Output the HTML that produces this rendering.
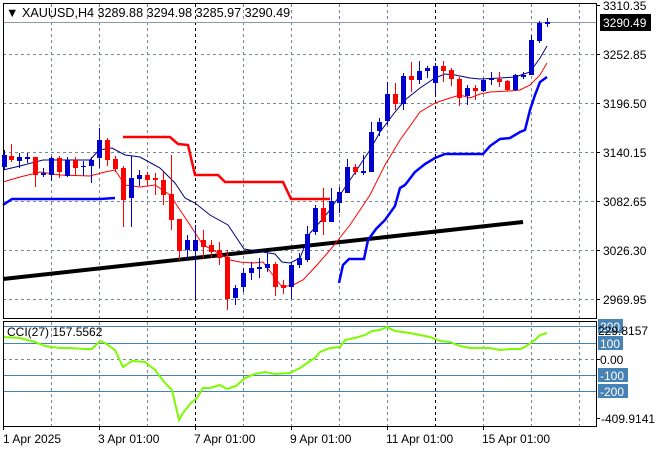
<!DOCTYPE html>
<html><head><meta charset="utf-8"><style>
html,body{margin:0;padding:0;background:#fff;width:660px;height:450px;overflow:hidden}
svg text{font-family:"Liberation Sans",sans-serif;font-size:12px;fill:#000}
</style></head><body>
<svg width="660" height="450" viewBox="0 0 660 450" xmlns="http://www.w3.org/2000/svg">
<g stroke="#778899" stroke-width="1" stroke-dasharray="3,3" fill="none">
<line x1="3" y1="54.5" x2="596" y2="54.5"/><line x1="3" y1="103.5" x2="596" y2="103.5"/>
<line x1="3" y1="152.5" x2="596" y2="152.5"/><line x1="3" y1="201.5" x2="596" y2="201.5"/>
<line x1="3" y1="250.5" x2="596" y2="250.5"/><line x1="3" y1="299.5" x2="596" y2="299.5"/>
<line x1="3" y1="359.5" x2="596" y2="359.5"/>
<path d="M51.5 4V318M99.5 4V318M147.5 4V318M243.5 4V318M291.5 4V318M339.5 4V318M387.5 4V318M483.5 4V318M531.5 4V318M579.5 4V318"/>
<path d="M51.5 322V426M99.5 322V426M147.5 322V426M243.5 322V426M291.5 322V426M339.5 322V426M387.5 322V426M483.5 322V426M531.5 322V426M579.5 322V426"/>
</g>
<g stroke="#000" stroke-dasharray="3,3"><path d="M195.5 4V318M435.5 4V318M195.5 322V426M435.5 322V426"/></g>
<line x1="3" y1="22.5" x2="596" y2="22.5" stroke="#8a9aa8"/>
<g stroke="#4682b4"><path d="M3 326.5H596M3 343.5H596M3 375.5H596M3 391.5H596"/></g>
<line x1="3" y1="279" x2="523" y2="222" stroke="#000" stroke-width="4"/>
<polyline fill="none" stroke="#ff0000" stroke-width="2.5" points="123,137 170,137 178,144 188,145 195,175 218,175 225,182 283,182 291,199 330,199"/>
<polyline fill="none" stroke="#0000ff" stroke-width="2.5" points="3,205 12,199 100,199 115,198"/>
<polyline fill="none" stroke="#0000ff" stroke-width="2.5" points="339,283 343,265 349,259 364,259 368,240 376,229 385,220 395,206 400,188 405,185 415,172 425,164 435,158 445,154 483,154 490,146 500,139 510,138 520,132 525,130 530,110 535,95 540,82 547,77"/>
<polyline fill="none" stroke="#000080" stroke-width="1" points="3,170 20,166 43,160 90,160 99,150 112,148 125,155 140,157 160,168 175,183 185,198 195,203 210,215 228,225 244,249 275,254 282,262 290,263 300,258 305,245 310,233 320,222 330,210 340,195 350,180 360,165 370,150 380,132 395,112 405,100 420,88 435,78 445,74 455,75 470,78 480,79 500,78 515,77 530,72 540,58 547,46"/>
<polyline fill="none" stroke="#ff0000" stroke-width="1" points="3,182 20,177 40,172 60,175 90,176 105,172 115,170 125,185 140,187 155,185 170,195 180,210 190,225 203,245 213,250 230,260 240,262 253,263 263,262 282,287 293,285 303,280 317,265 330,250 350,225 370,195 385,165 400,140 420,112 435,103 450,98 460,95 470,98 480,94 490,92 510,91 520,90 530,85 540,75 547,63"/>
<polyline fill="none" stroke="#7cfc00" stroke-width="2" points="3,337 20,338 35,342 45,346 60,348 70,348 85,349 92,349 100,341 105,343 115,350 123,367 132,361 145,362 155,370 165,383 172,390 179,420 183,413 190,404 197,398 203,388 210,388 220,385 227,389 236,386 245,378 255,374 265,372 275,374 290,373 300,368 310,361 315,358 320,352 330,348 340,347 345,340 355,338 365,335 372,331 380,330 387,327 395,331 410,333 430,337 440,341 450,342 460,346 470,348 490,348 500,350 510,349 520,349 525,347 535,340 540,335 547,333"/>
<g stroke="#000" fill="none"><rect x="3.5" y="3.5" width="593" height="315"/><rect x="3.5" y="321.5" width="593" height="105"/></g>
<g stroke="#000"><path d="M596 5.5h4M596 54.5h4M596 103.5h4M596 152.5h4M596 201.5h4M596 250.5h4M596 299.5h4M596 359.5h4M596 418.5h4M3.5 426v4M99.5 426v4M195.5 426v4M291.5 426v4M387.5 426v4M483.5 426v4"/></g>
<text x="6" y="17" style="font-size:12.6px">▼ XAUUSD,H4  3289.88 3294.98 3285.97 3290.49</text>
<text x="7" y="336">CCI(27) 157.5562</text>
<g>
<text x="603" y="10">3310.35</text>
<rect x="600" y="14" width="51" height="17" fill="#000"/><text x="603" y="27" style="fill:#fff">3290.49</text>
<text x="603" y="59">3252.85</text><text x="603" y="108">3196.50</text><text x="603" y="157">3140.15</text>
<text x="603" y="206">3082.65</text><text x="603" y="255">3026.30</text><text x="603" y="304">2969.95</text>
<rect x="598" y="319" width="25" height="14" fill="#4682b4"/><text x="600" y="331" style="fill:#fff">200</text>
<text x="598" y="335">229.8157</text>
<rect x="598" y="336" width="25" height="14" fill="#4682b4"/><text x="600" y="348" style="fill:#fff">100</text>
<text x="600" y="364">0.00</text>
<rect x="598" y="368" width="30" height="14" fill="#4682b4"/><text x="600" y="380" style="fill:#fff">-100</text>
<rect x="598" y="384" width="30" height="14" fill="#4682b4"/><text x="600" y="396" style="fill:#fff">-200</text>
<text x="601" y="423">-409.9141</text>
</g>
<g><text x="3" y="443">1 Apr 2025</text><text x="98" y="443">3 Apr 01:00</text><text x="194" y="443">7 Apr 01:00</text><text x="290" y="443">9 Apr 01:00</text><text x="386" y="443">11 Apr 01:00</text><text x="482" y="443">15 Apr 01:00</text></g>
<g fill="none">
<path stroke="#0000cd" d="M4.5 150V170M19.5 153V168M27.5 153V163M43.5 168V177M51.5 156V181M67.5 157V177M83.5 161V176M91.5 157V183M99.5 128V168M131.5 156V227M139.5 170V186M187.5 235V259M195.5 225V298M235.5 285V305M243.5 268V292M251.5 262V280M259.5 258V278M267.5 253V272M291.5 263V299M299.5 253V268M307.5 226V262M315.5 205V235M331.5 188V222M339.5 187V213M347.5 159V193M363.5 155V175M371.5 122V172M379.5 118V136M387.5 82V125M403.5 73V110M419.5 61V84M427.5 66V78M435.5 63V94M467.5 85V105M483.5 79V92M491.5 72V85M515.5 74V91M523.5 72V79M531.5 35V75M539.5 21V43M547.5 18V27"/>
<path stroke="#ff0000" d="M11.5 144V162M35.5 157V187M59.5 156V178M75.5 157V175M107.5 138V166M115.5 156V172M123.5 166V227M147.5 172V185M155.5 173V195M163.5 172V205M171.5 155V230M179.5 219V260M203.5 230V258M211.5 240V258M219.5 242V265M227.5 250V310M275.5 262V296M283.5 280V294M323.5 188V235M355.5 164V175M395.5 83V110M411.5 62V92M443.5 61V82M451.5 68V86M459.5 77V106M475.5 85V100M499.5 72V87M507.5 80V91"/>
</g>
<g fill="#0000cd">
<rect x="2" y="155" width="5" height="12"/><rect x="17" y="157" width="5" height="4"/><rect x="25" y="157" width="5" height="2"/><rect x="41" y="173" width="5" height="2"/><rect x="49" y="158" width="5" height="17"/><rect x="65" y="160" width="5" height="16"/><rect x="81" y="166" width="5" height="1"/><rect x="89" y="160" width="5" height="6"/><rect x="97" y="140" width="5" height="18"/><rect x="129" y="178" width="5" height="20"/><rect x="137" y="175" width="5" height="4"/><rect x="185" y="240" width="5" height="10"/><rect x="193" y="240" width="5" height="11"/><rect x="233" y="288" width="5" height="10"/><rect x="241" y="273" width="5" height="14"/><rect x="249" y="268" width="5" height="5"/><rect x="257" y="267" width="5" height="2"/><rect x="265" y="264" width="5" height="4"/><rect x="289" y="265" width="5" height="22"/><rect x="297" y="258" width="5" height="7"/><rect x="305" y="234" width="5" height="26"/><rect x="313" y="208" width="5" height="24"/><rect x="329" y="201" width="5" height="21"/><rect x="337" y="192" width="5" height="11"/><rect x="345" y="167" width="5" height="26"/><rect x="361" y="171" width="5" height="2"/><rect x="369" y="132" width="5" height="40"/><rect x="377" y="122" width="5" height="9"/><rect x="385" y="94" width="5" height="27"/><rect x="401" y="76" width="5" height="28"/><rect x="417" y="71" width="5" height="9"/><rect x="425" y="68" width="5" height="3"/><rect x="433" y="66" width="5" height="17"/><rect x="465" y="88" width="5" height="8"/><rect x="481" y="80" width="5" height="11"/><rect x="489" y="78" width="5" height="2"/><rect x="513" y="75" width="5" height="15"/><rect x="521" y="75" width="5" height="2"/><rect x="529" y="40" width="5" height="35"/><rect x="537" y="23" width="5" height="18"/><rect x="545" y="22" width="5" height="2"/>
</g>
<g fill="#ff0000">
<rect x="9" y="156" width="5" height="4"/><rect x="33" y="157" width="5" height="18"/><rect x="57" y="158" width="5" height="14"/><rect x="73" y="160" width="5" height="8"/><rect x="105" y="140" width="5" height="20"/><rect x="113" y="159" width="5" height="10"/><rect x="121" y="168" width="5" height="32"/><rect x="145" y="175" width="5" height="5"/><rect x="153" y="178" width="5" height="2"/><rect x="161" y="180" width="5" height="15"/><rect x="169" y="194" width="5" height="26"/><rect x="177" y="219" width="5" height="32"/><rect x="201" y="240" width="5" height="7"/><rect x="209" y="245" width="5" height="7"/><rect x="217" y="250" width="5" height="8"/><rect x="225" y="257" width="5" height="42"/><rect x="273" y="264" width="5" height="23"/><rect x="281" y="285" width="5" height="3"/><rect x="321" y="208" width="5" height="14"/><rect x="353" y="167" width="5" height="5"/><rect x="393" y="94" width="5" height="10"/><rect x="409" y="76" width="5" height="4"/><rect x="441" y="66" width="5" height="5"/><rect x="449" y="70" width="5" height="9"/><rect x="457" y="79" width="5" height="19"/><rect x="473" y="88" width="5" height="3"/><rect x="497" y="79" width="5" height="3"/><rect x="505" y="81" width="5" height="9"/>
</g>
</svg>
</body></html>
